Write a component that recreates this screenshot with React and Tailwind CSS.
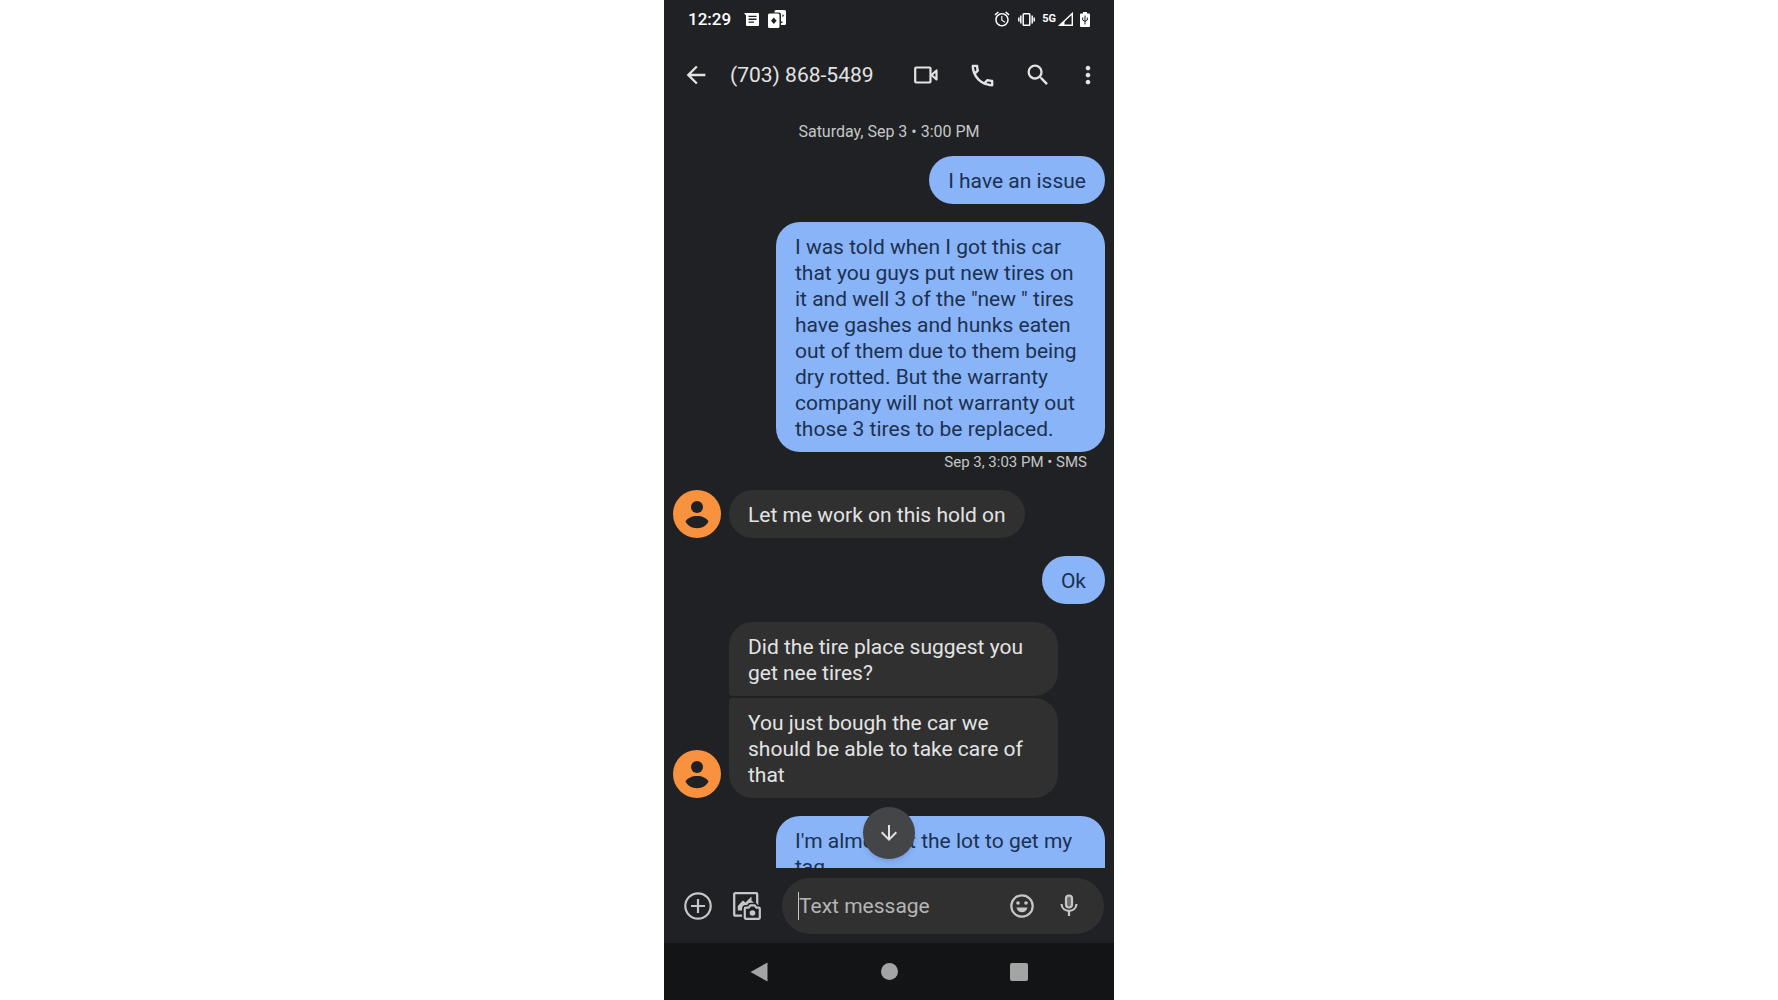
import React from "react";
import {
  MdAlarm,
  MdArrowBack,
  MdArrowDownward,
  MdMoreVert,
  MdOutlinePhone,
  MdSearch,
} from "react-icons/md";

const MessageIcon = () => (
  <svg width="15" height="13" viewBox="0 0 15 13" aria-hidden="true">
    <path
      fillRule="evenodd"
      fill="currentColor"
      d="M0 0h14a1 1 0 0 1 1 1v11a1 1 0 0 1-1 1H3a1 1 0 0 1-1-1V2.500zM4.500 2.800v1.300h8V2.800zM4.500 5.600v1.300h8V5.600zM4.500 8.400v1.300h5.500V8.400z"
    />
  </svg>
);

const CardsIcon = () => (
  <svg width="18" height="18" viewBox="0 0 18 18" aria-hidden="true">
    <path
      fill="currentColor"
      d="M8 0h8.500A1.500 1.500 0 0 1 18 1.500v12a1.500 1.500 0 0 1-1.500 1.500H13V13h1.500v-1.500H13V4.500A2 2 0 0 0 11 2.500H6.500v-1A1.500 1.500 0 0 1 8 0z"
    />
    <path
      fillRule="evenodd"
      fill="currentColor"
      d="M1.500 3.500H10A1.500 1.500 0 0 1 11.500 5v11.500A1.500 1.500 0 0 1 10 18H1.500A1.500 1.500 0 0 1 0 16.500V5a1.500 1.500 0 0 1 1.500-1.500zM5.800 7.500L3 10.800l2.800 3.300 2.800-3.300z"
    />
    <path fill="#202124" d="M14.500 4l1.500 1.500-1.500 2z" />
  </svg>
);

const VibrateIcon = () => (
  <svg width="17" height="13" viewBox="0 0 17 13" fill="none" stroke="currentColor" aria-hidden="true">
    <rect x="5.200" y="0.800" width="6.600" height="11.400" rx="0.800" strokeWidth="1.500" />
    <path strokeWidth="1.500" d="M2.800 2.500v8M14.200 2.500v8M0.800 4.500v4M16.200 4.500v4" />
  </svg>
);

const SignalIcon = () => (
  <svg width="15" height="14" viewBox="0 0 15 14" aria-hidden="true">
    <path fill="none" stroke="currentColor" strokeWidth="1.400" d="M1.700 13.300L14.300 1.500v11.800z" />
    <path fill="currentColor" d="M0.500 14L6.500 8.400V14z" />
  </svg>
);

const BatteryIcon = () => (
  <svg width="10" height="15" viewBox="0 0 10 15" aria-hidden="true">
    <path
      fill="currentColor"
      d="M3 0h4v1.500h2a1 1 0 0 1 1 1V14a1 1 0 0 1-1 1H1a1 1 0 0 1-1-1V2.500a1 1 0 0 1 1-1h2z"
    />
    <path fill="none" stroke="#202124" d="M5 3.500v9M2.700 5.500v2.500L5 9.500l2.300-1.500V5.500" />
  </svg>
);

const VideoIcon = () => (
  <svg width="24" height="18" viewBox="0 0 24 18" fill="none" stroke="currentColor" strokeWidth="2.200" strokeLinejoin="round" aria-hidden="true">
    <rect x="1.200" y="1.500" width="15.300" height="15" rx="1" />
    <path d="M17.500 9l5-4.500v9z" />
  </svg>
);

const cameraPath =
  "M12.800 15.700h2.900l1.600-2.300h4.400l1.600 2.300h2.500a1 1 0 0 1 1 1v9.100a1 1 0 0 1-1 1H12.800a1 1 0 0 1-1-1v-9.100a1 1 0 0 1 1-1z";

const GalleryIcon = () => (
  <svg width="28" height="28" viewBox="0 0 28 28" fill="none" strokeLinejoin="round" aria-hidden="true">
    <rect x="1.200" y="1.200" width="23" height="22.500" rx="1" stroke="currentColor" strokeWidth="2.300" />
    <path
      fill="currentColor"
      d="M4.800 18.500V14l5-5.500 2.700 2L18.500 4.500v4.300l2.300 1.700-2 2.500H14L9 18.500z"
    />
    <path d={cameraPath} fill="#202124" stroke="#202124" strokeWidth="5.500" />
    <path d={cameraPath} stroke="currentColor" strokeWidth="2.200" />
    <circle cx="19.500" cy="21" r="2.800" fill="currentColor" />
  </svg>
);

const AddIcon = () => (
  <svg width="28" height="28" viewBox="0 0 28 28" fill="none" stroke="currentColor" strokeWidth="2.200" aria-hidden="true">
    <circle cx="14" cy="14" r="12.700" />
    <path d="M14 7v14M7 14h14" />
  </svg>
);

const EmojiIcon = () => (
  <svg width="24" height="24" viewBox="0 0 24 24" fill="currentColor" aria-hidden="true">
    <circle cx="12" cy="12" r="10.700" fill="none" stroke="currentColor" strokeWidth="2.200" />
    <circle cx="8" cy="9" r="1.800" />
    <circle cx="16" cy="9" r="1.800" />
    <path d="M6.500 13.500h11c-.6 3-2.800 4.800-5.500 4.800s-4.900-1.800-5.500-4.800z" />
  </svg>
);

const MicIcon = () => (
  <svg width="18" height="24" viewBox="0 0 18 24" fill="none" stroke="currentColor" strokeWidth="2.200" aria-hidden="true">
    <rect x="6" y="1.500" width="6" height="12" rx="3" fill="#6c6d6d" />
    <path d="M1.500 10c.3 4.300 3.400 6.800 7.500 6.800s7.200-2.500 7.500-6.800M9 16.800V22" />
  </svg>
);

const Avatar = () => (
  <svg className="size-12 shrink-0" viewBox="0 0 48 48" role="img" aria-label="Contact">
    <circle cx="24" cy="24" r="24" fill="#f9923e" />
    <circle cx="24" cy="17" r="6" fill="#202124" />
    <path fill="#202124" d="M12.500 31.500c2-3.600 6.500-5.500 11.500-5.500s9.500 1.900 11.500 5.500c-2 4.200-6.500 6.700-11.500 6.700s-9.500-2.500-11.500-6.700z" />
  </svg>
);

const Sent = ({ children }) => (
  <p className="max-w-[329px] self-end rounded-3xl bg-[#8ab4f8] px-[19px] pt-3 pb-[10px] text-[#1b3150]">
    {children}
  </p>
);

const Received = ({ messages }) => (
  <div className="flex items-end gap-2">
    <Avatar />
    <div className="flex max-w-[329px] flex-col items-start gap-0.5">
      {messages.map((text, i) => (
        <p
          key={text}
          className={`rounded-3xl bg-[#303030] px-[19px] pt-3 pb-[10px] ${
            i > 0 ? "rounded-tl-sm" : ""
          } ${i < messages.length - 1 ? "rounded-bl-sm" : ""}`}
        >
          {text}
        </p>
      ))}
    </div>
  </div>
);

const App = () => {
  return (
    <div className="flex h-screen justify-center bg-white font-[Roboto,sans-serif] text-[#e3e3e3]">
      <div className="flex w-full max-w-[450px] flex-col bg-[#202124]">
        {/* Status bar */}
        <div className="flex h-[38px] shrink-0 items-center justify-between px-6 text-white">
          <div className="flex items-center gap-[9px]">
            <span className="mr-1 pt-0.5 text-[17px] font-medium">12:29</span>
            <MessageIcon />
            <CardsIcon />
          </div>
          <div className="flex items-center gap-[7px]">
            <MdAlarm size={18} />
            <VibrateIcon />
            <div className="flex items-center gap-0.5">
              <span className="text-[11px] font-bold">5G</span>
              <SignalIcon />
            </div>
            <BatteryIcon />
          </div>
        </div>

        {/* App bar */}
        <header className="flex h-[74px] shrink-0 items-center pr-4 pl-[18px]">
          <button aria-label="Back" className="mr-5">
            <MdArrowBack size={28} />
          </button>
          <h1 className="pt-0.5 text-[21px]">(703) 868-5489</h1>
          <div className="ml-auto flex items-center gap-6">
            <button aria-label="Video call" className="flex w-8 justify-center">
              <VideoIcon />
            </button>
            <button aria-label="Call" className="flex w-8 justify-center">
              <MdOutlinePhone size={29} />
            </button>
            <button aria-label="Search" className="flex w-8 justify-center">
              <MdSearch size={28} />
            </button>
            <button aria-label="More options" className="flex w-5 justify-center">
              <MdMoreVert size={28} className="shrink-0" />
            </button>
          </div>
        </header>

        {/* Conversation */}
        <main className="relative min-h-0 flex-1 overflow-hidden">
          <div className="flex flex-col gap-[18px] px-[9px] pt-[10px] text-[21px] leading-[26px]">
            <div className="-mb-1 text-center text-[16px] leading-5 text-[#c4c7c5]">
              Saturday, Sep 3 • 3:00 PM
            </div>
            <Sent>I have an issue</Sent>
            <div className="flex flex-col">
              <Sent>
                I was told when I got this car that you guys put new tires on it
                and well 3 of the "new " tires have gashes and hunks eaten out
                of them due to them being dry rotted. But the warranty company
                will not warranty out those 3 tires to be replaced.
              </Sent>
              <div className="px-[18px] text-right text-[15px] leading-5 text-[#c4c7c5]">
                Sep 3, 3:03 PM • SMS
              </div>
            </div>
            <Received messages={["Let me work on this hold on"]} />
            <Sent>Ok</Sent>
            <Received
              messages={[
                "Did the tire place suggest you get nee tires?",
                "You just bough the car we should be able to take care of that",
              ]}
            />
            <Sent>I'm almost at the lot to get my tag</Sent>
          </div>
          <button
            aria-label="Scroll to latest"
            className="absolute bottom-[9px] left-1/2 flex size-[52px] -translate-x-1/2 items-center justify-center rounded-full bg-[#434546] shadow-md"
          >
            <MdArrowDownward size={24} />
          </button>
        </main>

        {/* Composer */}
        <form className="flex h-[75px] shrink-0 items-center pr-[10px] pl-5 text-[#c4c7c5]">
          <button type="button" aria-label="Add attachment">
            <AddIcon />
          </button>
          <button type="button" aria-label="Gallery and camera" className="ml-[21px]">
            <GalleryIcon />
          </button>
          <div className="ml-[21px] flex h-14 min-w-0 flex-1 items-center rounded-full bg-[#303030] pr-[26px] pl-4">
            <span className="h-7 w-px shrink-0 bg-[#c4c7c5]" />
            <input
              type="text"
              aria-label="Text message"
              placeholder="Text message"
              className="min-w-0 flex-1 pt-0.5 text-[21px] outline-none placeholder:text-[#b4b6b5]"
            />
            <button type="button" aria-label="Emoji" className="mr-[26px]">
              <EmojiIcon />
            </button>
            <button type="button" aria-label="Voice message">
              <MicIcon />
            </button>
          </div>
        </form>

        {/* System navigation */}
        <nav className="flex h-[57px] shrink-0 items-center justify-center bg-[#131416] text-[#a3a4a4]">
          <button aria-label="System back" className="flex w-[130px] justify-center">
            <svg width="18" height="20" viewBox="0 0 18 20" fill="currentColor" aria-hidden="true">
              <path d="M17.500 0.500v19L0.500 10z" />
            </svg>
          </button>
          <button aria-label="Home" className="flex w-[130px] justify-center">
            <span className="size-[17px] rounded-full bg-current" />
          </button>
          <button aria-label="Recent apps" className="flex w-[130px] justify-center">
            <span className="size-[18px] rounded-xs bg-current" />
          </button>
        </nav>
      </div>
    </div>
  );
};

export default App;
